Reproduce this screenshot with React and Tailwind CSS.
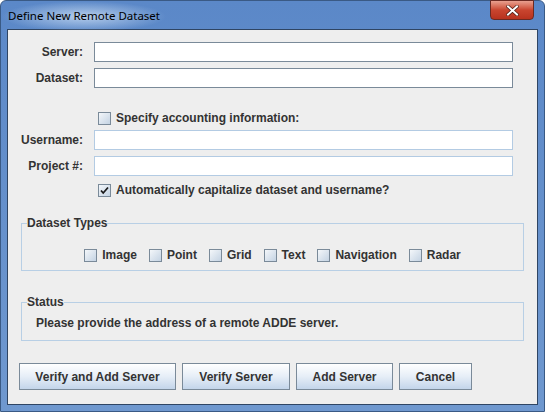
const font = { fontFamily: '"Liberation Sans", Arial, sans-serif' };

const Checkbox = ({ checked }) => (
  <span className="flex h-[13px] w-[13px] shrink-0 items-center justify-center border border-[#7a8a99] bg-gradient-to-br from-[#f4f7fa] to-[#c4d3e3]">
    {checked && (
      <svg width="9" height="9" viewBox="0 0 9 9">
        <path d="M1 4.5 L3.2 7 L8 1.5" fill="none" stroke="#1a1a1a" strokeWidth="1.8" />
      </svg>
    )}
  </span>
);

const CheckLabel = ({ label, checked }) => (
  <label className="flex items-center gap-[5px] text-[12px] font-bold text-[#333333]">
    <Checkbox checked={checked} />
    <span>{label}</span>
  </label>
);

const Field = ({ label, light }) => (
  <div className="flex items-center">
    <span className="w-[75px] text-right text-[12px] font-bold text-[#333333]">{label}</span>
    <div
      className={
        'ml-[11px] h-[20px] w-[419px] bg-white border ' +
        (light ? 'border-[#b3cbe3]' : 'border-[#7a8a99]')
      }
    />
  </div>
);

const Group = ({ title, className, children }) => (
  <div className={'relative mx-[13px] border border-[#b8cfe5] ' + className}>
    <span className="absolute left-[5px] top-[-8px] bg-[#eeeeee] text-[12px] font-bold leading-[14px] text-[#333333]">
      {title}
    </span>
    {children}
  </div>
);

const Button = ({ label, w }) => (
  <button
    className={
      'h-[27px] border border-[#7a8a99] bg-gradient-to-b from-[#ffffff] via-[#e6eef7] to-[#c3d5ea] text-[12px] font-bold text-[#333333] ' +
      w
    }
  >
    {label}
  </button>
);

export default function App() {
  return (
    <div className="flex h-[412px] w-[545px] flex-col rounded-t-[6px] border border-[#3a5a85] bg-gradient-to-b from-[#5b88c8] to-[#6f98cf]" style={font}>
      {/* title bar */}
      <div className="relative flex h-[28px] shrink-0 items-start">
        <div className="ml-[0px] rounded-[10px] bg-[radial-gradient(ellipse_at_center,rgba(220,235,250,0.7),rgba(220,235,250,0)_70%)] px-[7px] pb-[5px] pt-[2px]">
          <span className="text-[11.5px] leading-[18px] text-black" style={{ fontFamily: '"Noto Sans", sans-serif' }}>
            Define New Remote Dataset
          </span>
        </div>
        <div className="absolute right-[10px] top-[-1px] flex h-[20px] w-[44px] items-center justify-center rounded-b-[4px] border border-[#6b2a22] bg-gradient-to-b from-[#e8a08f] via-[#c9452f] to-[#b8321e]">
          <svg width="13" height="11" viewBox="0 0 13 11">
            <path d="M2 1.5 L11 9.5 M11 1.5 L2 9.5" stroke="#4a1c14" strokeWidth="3.4" strokeLinecap="square" />
            <path d="M2 1.5 L11 9.5 M11 1.5 L2 9.5" stroke="#ffffff" strokeWidth="2" strokeLinecap="square" />
          </svg>
        </div>
      </div>

      {/* content */}
      <div className="mx-[6px] flex h-[376px] flex-col border border-[#2f4563] bg-[#eeeeee]">
        <div className="flex flex-col pt-[12px]">
          <Field label="Server:" />
          <div className="mt-[6px]">
            <Field label="Dataset:" />
          </div>
          <div className="ml-[90px] mt-[20px] flex h-[20px] items-center">
            <CheckLabel label="Specify accounting information:" />
          </div>
          <div className="mt-[2px]">
            <Field label="Username:" light />
          </div>
          <div className="mt-[6px]">
            <Field label="Project #:" light />
          </div>
          <div className="ml-[90px] mt-[4px] flex h-[20px] items-center">
            <CheckLabel label="Automatically capitalize dataset and username?" checked />
          </div>
        </div>

        <Group title="Dataset Types" className="mt-[23px] h-[48px]">
          <div className="flex h-full items-end justify-center gap-[12px] pb-[6px]">
            <CheckLabel label="Image" />
            <CheckLabel label="Point" />
            <CheckLabel label="Grid" />
            <CheckLabel label="Text" />
            <CheckLabel label="Navigation" />
            <CheckLabel label="Radar" />
          </div>
        </Group>

        <Group title="Status" className="mt-[31px] h-[39px]">
          <div className="pl-[14px] pt-[13px] text-[12px] font-bold leading-[14px] text-[#333333]">
            Please provide the address of a remote ADDE server.
          </div>
        </Group>

        <div className="ml-[11px] mt-[22px] flex gap-[6px]">
          <Button label="Verify and Add Server" w="w-[157px]" />
          <Button label="Verify Server" w="w-[108px]" />
          <Button label="Add Server" w="w-[97px]" />
          <Button label="Cancel" w="w-[73px]" />
        </div>
      </div>
    </div>
  );
}
